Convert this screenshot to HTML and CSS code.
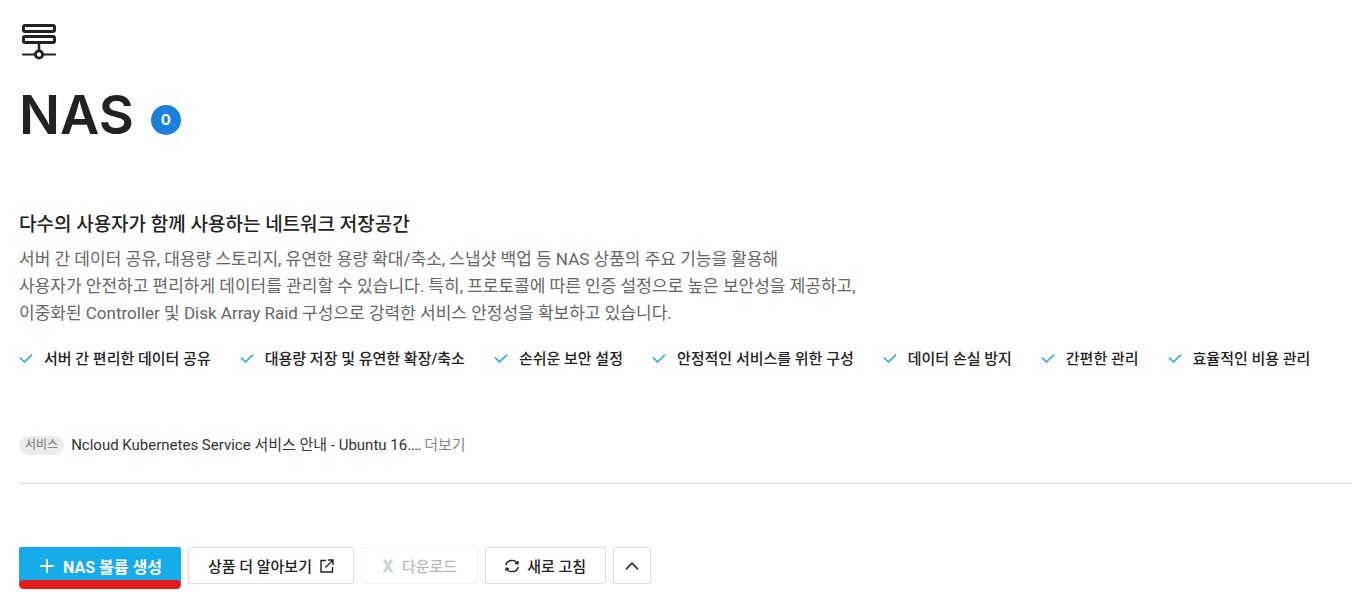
FILE: index.html
```
<!DOCTYPE html>
<html lang="ko">
<head>
  <meta charset="UTF-8" />
  <meta name="viewport" content="width=device-width, initial-scale=1.0"/>
  <title>NAS</title>
  <link rel="stylesheet" href="styles.css">
</head>
<body>
  <main class="page">
    <header class="title-area">
      <svg class="nas-icon" width="36" height="38" viewBox="0 0 36 38" fill="none" stroke="#222" stroke-width="3" aria-hidden="true">
        <rect x="2.5" y="2.5" width="31" height="6" rx="1.5"/>
        <rect x="2.5" y="13.5" width="31" height="6" rx="1.5"/>
        <path d="M18 20v8" stroke-width="2.5"/>
        <path d="M2 31.5h12M22 31.5h12" stroke-width="2.2" stroke-linecap="round"/>
        <circle cx="18" cy="31.5" r="3.6" stroke-width="2.8"/>
      </svg>
      <div class="title-row">
        <h1>NAS</h1>
        <span class="count">0</span>
      </div>
    </header>

    <section class="intro">
      <h2>다수의 사용자가 함께 사용하는 네트워크 저장공간</h2>
      <p>
        서버 간 데이터 공유, 대용량 스토리지, 유연한 용량 확대/축소, 스냅샷 백업 등 NAS 상품의 주요 기능을 활용해<br>
        사용자가 안전하고 편리하게 데이터를 관리할 수 있습니다. 특히, 프로토콜에 따른 인증 설정으로 높은 보안성을 제공하고,<br>
        이중화된 Controller 및 Disk Array Raid 구성으로 강력한 서비스 안정성을 확보하고 있습니다.
      </p>
      <ul class="features">
        <li><svg class="check" viewBox="0 0 14 10"><path d="M1 3.500L5.500 8L13 .7"/></svg>서버 간 편리한 데이터 공유</li>
        <li><svg class="check" viewBox="0 0 14 10"><path d="M1 3.500L5.500 8L13 .7"/></svg>대용량 저장 및 유연한 확장/축소</li>
        <li><svg class="check" viewBox="0 0 14 10"><path d="M1 3.500L5.500 8L13 .7"/></svg>손쉬운 보안 설정</li>
        <li><svg class="check" viewBox="0 0 14 10"><path d="M1 3.500L5.500 8L13 .7"/></svg>안정적인 서비스를 위한 구성</li>
        <li><svg class="check" viewBox="0 0 14 10"><path d="M1 3.500L5.500 8L13 .7"/></svg>데이터 손실 방지</li>
        <li><svg class="check" viewBox="0 0 14 10"><path d="M1 3.500L5.500 8L13 .7"/></svg>간편한 관리</li>
        <li><svg class="check" viewBox="0 0 14 10"><path d="M1 3.500L5.500 8L13 .7"/></svg>효율적인 비용 관리</li>
      </ul>
    </section>

    <div class="notice">
      <span class="tag">서비스</span>
      <a class="notice-title" href="#">Ncloud Kubernetes Service 서비스 안내 - Ubuntu 16.…</a>
      <a class="more" href="#">더보기</a>
    </div>

    <div class="toolbar">
      <div class="marked">
        <button type="button" class="btn primary">
          <svg width="14" height="14" viewBox="0 0 14 14" fill="none" stroke="#fff" stroke-width="2"><path d="M7 0v14M0 7h14"/></svg>
          NAS 볼륨 생성
        </button>
      </div>
      <button type="button" class="btn learn">
        상품 더 알아보기
        <svg width="14" height="14" viewBox="0 0 14 14" fill="none" stroke="#222" stroke-width="1.4"><path d="M6 1.5H1v11.5h11.5V8M8 1h5v5M13 1L5.5 8.5"/></svg>
      </button>
      <button type="button" class="btn download" disabled>
        <svg width="12" height="14" viewBox="0 0 12 14" fill="#c3dccd"><path d="M.5 .5h3.4L6 4.6L8.1 .5h3.4L7.8 7l3.7 6.500H8.100L6 9.400L3.900 13.500H.5L4.200 7z"/></svg>
        다운로드
      </button>
      <button type="button" class="btn refresh">
        <svg width="14" height="14" viewBox="0 0 14 14" fill="none" stroke="#222" stroke-width="1.4"><path d="M.8 6.200a6.200 5.600 0 0 1 11.700-1.700M13.200 7.800a6.200 5.600 0 0 1-11.700 1.700M13.300 2.200L12.700 5L10 4.400M.7 11.800L1.300 9L4 9.600"/></svg>
        새로 고침
      </button>
      <button type="button" class="btn fold" aria-label="접기">
        <svg width="14" height="8" viewBox="0 0 14 8" fill="none" stroke="#222" stroke-width="1.6"><path d="M1 7.2L7 1.2L13 7.2"/></svg>
      </button>
    </div>
  </main>
</body>
</html>
```
FILE: styles.css
```
* {
  box-sizing: border-box;
}

body {
  margin: 0;
  background-color: #fff;
  color: #222;
  font-family: Roboto, "Noto Sans CJK KR", sans-serif;
}

.page {
  padding: 23px 0 8px 19px;
}

.nas-icon {
  display: block;
  margin-left: 2px;
}

.title-row {
  display: flex;
  align-items: center;
  gap: 17px;
  margin-top: 19px;
}

h1 {
  margin: 0;
  font-family: Inter, sans-serif;
  font-size: 54px;
  line-height: 70px;
  font-weight: 600;
}

.count {
  width: 30px;
  height: 30px;
  margin-top: 10px;
  border-radius: 50%;
  background-color: #1b7fdc;
  color: #fff;
  font-family: Inter, sans-serif;
  font-size: 15px;
  line-height: 30px;
  font-weight: 700;
  text-align: center;
}

.intro {
  margin-top: 61px;
}

h2 {
  margin: 0;
  font-size: 19px;
  line-height: 28px;
  font-weight: 500;
}

.intro p {
  margin: 7px 0 0;
  color: #666;
  font-size: 17px;
  line-height: 27px;
}

.features {
  display: flex;
  gap: 29px;
  margin: 20px 0 0;
  padding: 0;
  list-style: none;
  font-size: 15px;
  line-height: 24px;
  font-weight: 500;
  white-space: nowrap;
}

.features li {
  display: flex;
  align-items: center;
  gap: 11px;
}

.check {
  width: 14px;
  height: 10px;
  fill: none;
  stroke: #1ea0eb;
  stroke-width: 1.5;
}

.notice {
  display: flex;
  align-items: center;
  margin-top: 62px;
  padding-bottom: 26px;
  border-bottom: 1px solid #d9d9d9;
  font-size: 15px;
  line-height: 24px;
}

.notice a {
  text-decoration: none;
}

.tag {
  margin-right: 7px;
  padding: 0 6px;
  border-radius: 10px;
  background-color: #ebebeb;
  color: #777;
  font-size: 12px;
  line-height: 19px;
}

.notice-title {
  color: #333;
}

.more {
  margin-left: 3px;
  color: #888;
}

.toolbar {
  display: flex;
  gap: 7px;
  margin-top: 63px;
}

.btn {
  display: flex;
  align-items: center;
  height: 37px;
  padding: 0 19px;
  border: 1px solid #ddd;
  border-radius: 2px;
  background-color: #fff;
  color: #222;
  font-family: inherit;
  font-size: 15px;
  font-weight: 500;
  white-space: nowrap;
  gap: 8px;
  cursor: pointer;
}

.primary {
  padding: 0 18px 0 20px;
  gap: 9px;
  border-color: #16ace9;
  background-color: #16ace9;
  color: #fff;
  font-size: 16px;
  font-weight: 700;
}

/* red marker under the main action */
.marked {
  position: relative;
}

.marked::after {
  content: "";
  position: absolute;
  left: 0;
  right: 0;
  top: 33px;
  height: 9px;
  border-radius: 5px;
  background-color: #e41b1d;
}

.download {
  padding: 0 20px;
  border-color: #f3f3f3;
  color: #bbb;
  cursor: default;
}

.fold {
  padding: 0 11px;
}
```
